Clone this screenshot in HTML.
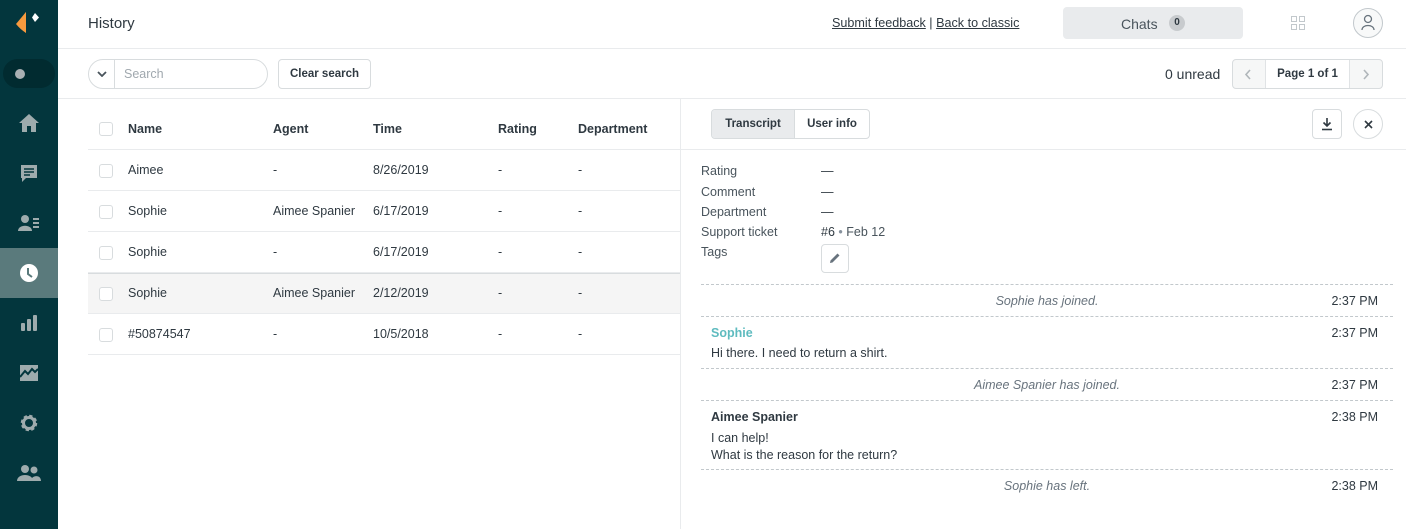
<!DOCTYPE html>
<html><head><meta charset="utf-8"><style>
*{box-sizing:border-box;margin:0;padding:0}
body{width:1406px;height:529px;overflow:hidden;font-family:"Liberation Sans",sans-serif;color:#2f3941;background:#fff;position:relative;font-size:13px}
.a{position:absolute}
.sb{left:0;top:0;width:58px;height:529px;background:#03363d}
.ic{left:0;width:58px;height:50px;display:flex;align-items:center;justify-content:center}
.hl{border-bottom:1px solid #e9ebed}
.th{font-weight:bold;font-size:12.5px}
.cb{width:14px;height:14px;border:1px solid #d8dcde;border-radius:3px;background:#fff}
.row{left:88px;width:592px;height:41px;border-bottom:1px solid #e9ebed}
.row span{position:absolute;top:13px;font-size:12.5px}
.btn{border:1px solid #d8dcde;border-radius:4px;background:#fff}
.lab{left:701px;font-size:12.5px;color:#49545c}
.val{left:821px;font-size:12.5px}
.dash{left:701px;width:692px;border-top:1px dashed #c2c8cc}
.sys{left:701px;width:692px;text-align:center;font-style:italic;color:#68737d;font-size:12.5px}
.tm{right:28px;font-size:12.5px}
</style></head><body>
<div class="a sb"></div>
<svg class="a" style="left:14px;top:10px" width="30" height="25" viewBox="0 0 30 25"><path d="M12 2 L12 23 Q6 19 2 14 Z" fill="#f79a3e"/><path d="M12 2 L12 23 L3 14 Z" fill="#f79a3e"/><path d="M21 3 L25 7.5 L21 12 L18 7.5 Z" fill="#fff"/></svg>
<div class="a" style="left:3px;top:59px;width:52px;height:29px;border-radius:15px;background:#012b30"></div>
<div class="a" style="left:15px;top:69px;width:10px;height:10px;border-radius:50%;background:#a9b0b3"></div>
<div class="a ic" style="top:98px"><svg width="22" height="20" viewBox="0 0 22 20"><path d="M11 1 L21 10 L18 10 L18 19 L13 19 L13 13 L9 13 L9 19 L4 19 L4 10 L1 10Z" fill="#9eabad"/></svg></div>
<div class="a ic" style="top:148px"><svg width="20" height="20" viewBox="0 0 20 20"><path d="M2 2 H18 V15 H7 L3 19 V15 H2Z" fill="#9eabad"/><path d="M5 6H15M5 9H15M5 12H11" stroke="#03363d" stroke-width="1.5"/></svg></div>
<div class="a ic" style="top:198px"><svg width="22" height="20" viewBox="0 0 22 20"><circle cx="7" cy="6" r="4" fill="#9eabad"/><path d="M0 18 C0 11 14 11 14 18Z" fill="#9eabad"/><path d="M15 6H21M15 10H21M15 14H21" stroke="#9eabad" stroke-width="2"/></svg></div>
<div class="a ic" style="top:248px;background:#5a7a7c"><svg width="20" height="20" viewBox="0 0 20 20"><circle cx="10" cy="10" r="9" fill="#fff"/><path d="M9 5V11L13 14" stroke="#5a7a7c" stroke-width="2" fill="none"/></svg></div>
<div class="a ic" style="top:298px"><svg width="18" height="18" viewBox="0 0 18 18"><rect x="1" y="9" width="4" height="8" rx="1" fill="#9eabad"/><rect x="7" y="5" width="4" height="12" rx="1" fill="#9eabad"/><rect x="13" y="1" width="4" height="16" rx="1" fill="#9eabad"/></svg></div>
<div class="a ic" style="top:348px"><svg width="20" height="18" viewBox="0 0 20 18"><rect x="1" y="1" width="18" height="16" fill="#9eabad"/><path d="M1 13 L6 7 L9 10 L13 5 L16 8 L19 5" stroke="#03363d" stroke-width="2" fill="none"/></svg></div>
<div class="a ic" style="top:398px"><svg width="20" height="20" viewBox="0 0 20 20"><circle cx="10" cy="10" r="6.5" fill="none" stroke="#9eabad" stroke-width="3.5" stroke-dasharray="3 2.1"/><circle cx="10" cy="10" r="5.5" fill="none" stroke="#9eabad" stroke-width="3"/></svg></div>
<div class="a ic" style="top:448px"><svg width="24" height="18" viewBox="0 0 24 18"><circle cx="8" cy="5" r="4" fill="#9eabad"/><circle cx="17" cy="6" r="3.5" fill="#9eabad"/><path d="M0 17 C0 9 16 9 16 17Z M14 17 C14 11 24 10 24 17Z" fill="#9eabad"/></svg></div>

<div class="a hl" style="left:58px;top:0;width:1348px;height:49px"></div>
<div class="a" style="left:88px;top:15px;font-size:15px">History</div>
<div class="a" style="left:832px;top:16px;font-size:12.6px"><u>Submit feedback</u> | <u>Back to classic</u></div>
<div class="a" style="left:1063px;top:7px;width:180px;height:32px;background:#e9ebed;border-radius:4px"></div>
<div class="a" style="left:1121px;top:16px;font-size:14px;color:#49545c">Chats</div>
<div class="a" style="left:1169px;top:15px;width:16px;height:16px;border-radius:50%;background:#c8cbce;font-size:10px;text-align:center;line-height:16px;font-weight:bold">0</div>
<svg class="a" style="left:1291px;top:16px" width="15" height="15"><rect x=".5" y=".5" width="5" height="5" fill="none" stroke="#c2c8cc"/><rect x="8.5" y=".5" width="5" height="5" fill="none" stroke="#c2c8cc"/><rect x=".5" y="8.5" width="5" height="5" fill="none" stroke="#c2c8cc"/><rect x="8.5" y="8.5" width="5" height="5" fill="none" stroke="#c2c8cc"/></svg>
<div class="a" style="left:1353px;top:8px;width:30px;height:30px;border-radius:50%;border:1px solid #c2c8cc;background:#f8f9f9"></div>
<svg class="a" style="left:1360px;top:14px" width="16" height="18"><circle cx="8" cy="5" r="3.5" fill="none" stroke="#68737d" stroke-width="1.3"/><path d="M2 16 C2 10 14 10 14 16" fill="none" stroke="#68737d" stroke-width="1.3"/></svg>

<div class="a hl" style="left:58px;top:49px;width:1348px;height:50px"></div>
<div class="a" style="left:88px;top:59px;width:180px;height:30px;border:1px solid #d8dcde;border-radius:15px"></div>
<div class="a" style="left:114px;top:60px;width:1px;height:28px;background:#d8dcde"></div>
<svg class="a" style="left:97px;top:71px" width="10" height="6"><path d="M1 1L5 5L9 1" stroke="#49545c" stroke-width="1.8" fill="none"/></svg>
<div class="a" style="left:124px;top:67px;font-size:12.5px;color:#a0a8ae">Search</div>
<div class="a btn" style="left:278px;top:59px;width:93px;height:30px;font-size:11.5px;font-weight:bold;text-align:center;line-height:28px">Clear search</div>
<div class="a" style="left:1165px;top:66px;font-size:14px">0 unread</div>
<div class="a btn" style="left:1232px;top:59px;width:151px;height:30px;background:#f6f7f7"></div>
<div class="a" style="left:1265px;top:60px;width:85px;height:28px;background:#fff;border-left:1px solid #e0e3e5;border-right:1px solid #e0e3e5;font-size:11.5px;font-weight:bold;text-align:center;line-height:28px">Page 1 of 1</div>
<svg class="a" style="left:1244px;top:69px" width="8" height="11"><path d="M6 1L2 5.5L6 10" stroke="#b0b6ba" stroke-width="1.6" fill="none"/></svg>
<svg class="a" style="left:1362px;top:69px" width="8" height="11"><path d="M2 1L6 5.5L2 10" stroke="#b0b6ba" stroke-width="1.6" fill="none"/></svg>

<div class="a" style="left:680px;top:99px;width:1px;height:430px;background:#e9ebed"></div>
<div class="a row" style="top:108px;height:42px"><div class="a cb" style="left:11px;top:14px"></div>
<span class="th" style="left:40px;top:14px">Name</span><span class="th" style="left:185px;top:14px">Agent</span><span class="th" style="left:285px;top:14px">Time</span><span class="th" style="left:410px;top:14px">Rating</span><span class="th" style="left:490px;top:14px">Department</span></div>
<div class="a row" style="top:150px"><div class="a cb" style="left:11px;top:14px"></div><span style="left:40px">Aimee</span><span style="left:185px">-</span><span style="left:285px">8/26/2019</span><span style="left:410px">-</span><span style="left:490px">-</span></div>
<div class="a row" style="top:191px"><div class="a cb" style="left:11px;top:14px"></div><span style="left:40px">Sophie</span><span style="left:185px">Aimee Spanier</span><span style="left:285px">6/17/2019</span><span style="left:410px">-</span><span style="left:490px">-</span></div>
<div class="a row" style="top:232px"><div class="a cb" style="left:11px;top:14px"></div><span style="left:40px">Sophie</span><span style="left:185px">-</span><span style="left:285px">6/17/2019</span><span style="left:410px">-</span><span style="left:490px">-</span></div>
<div class="a row" style="top:273px;background:#f5f5f5;border-top:1px solid #d8dcde"><div class="a cb" style="left:11px;top:13px"></div><span style="left:40px;top:12px">Sophie</span><span style="left:185px;top:12px">Aimee Spanier</span><span style="left:285px;top:12px">2/12/2019</span><span style="left:410px;top:12px">-</span><span style="left:490px;top:12px">-</span></div>
<div class="a row" style="top:314px"><div class="a cb" style="left:11px;top:14px"></div><span style="left:40px">#50874547</span><span style="left:185px">-</span><span style="left:285px">10/5/2018</span><span style="left:410px">-</span><span style="left:490px">-</span></div>

<div class="a" style="left:681px;top:149px;width:725px;border-top:1px solid #e9ebed"></div>
<div class="a btn" style="left:711px;top:109px;width:159px;height:30px;overflow:hidden"><div class="a" style="left:0;top:0;width:83px;height:28px;background:#e9ebed;border-right:1px solid #d8dcde;font-size:11.5px;font-weight:bold;text-align:center;line-height:28px">Transcript</div><div class="a" style="left:83px;top:0;width:74px;height:28px;font-size:11.5px;font-weight:bold;text-align:center;line-height:28px">User info</div></div>
<div class="a btn" style="left:1312px;top:109px;width:30px;height:30px"></div>
<svg class="a" style="left:1321px;top:117px" width="12" height="14"><path d="M6 1V9M2.5 5.5L6 9L9.5 5.5" stroke="#2f3941" stroke-width="1.6" fill="none"/><path d="M1 12.5H11" stroke="#2f3941" stroke-width="1.6"/></svg>
<div class="a" style="left:1353px;top:109px;width:30px;height:30px;border:1px solid #d8dcde;border-radius:50%"></div>
<svg class="a" style="left:1364px;top:120px" width="9" height="9"><path d="M1 1L8 8M8 1L1 8" stroke="#2f3941" stroke-width="1.6"/></svg>

<div class="a lab" style="top:164px">Rating</div><div class="a val" style="top:164px">—</div>
<div class="a lab" style="top:185px">Comment</div><div class="a val" style="top:185px">—</div>
<div class="a lab" style="top:205px">Department</div><div class="a val" style="top:205px">—</div>
<div class="a lab" style="top:225px">Support ticket</div><div class="a val" style="top:225px">#6 <span style="color:#87929d">•</span> <span style="color:#49545c">Feb 12</span></div>
<div class="a lab" style="top:245px">Tags</div>
<div class="a btn" style="left:821px;top:244px;width:28px;height:29px"></div>
<svg class="a" style="left:829px;top:252px" width="12" height="12"><path d="M1 11L1.5 8.5L8.5 1.5L10.5 3.5L3.5 10.5Z" fill="#68737d"/></svg>

<div class="a dash" style="top:284px"></div>
<div class="a sys" style="top:294px">Sophie has joined.</div><div class="a tm" style="top:294px">2:37 PM</div>
<div class="a dash" style="top:316px"></div>
<div class="a" style="left:711px;top:326px;font-weight:bold;color:#5ebbbf;font-size:12.5px">Sophie</div><div class="a tm" style="top:326px">2:37 PM</div>
<div class="a" style="left:711px;top:346px;font-size:12.5px">Hi there. I need to return a shirt.</div>
<div class="a dash" style="top:368px"></div>
<div class="a sys" style="top:378px">Aimee Spanier has joined.</div><div class="a tm" style="top:378px">2:37 PM</div>
<div class="a dash" style="top:400px"></div>
<div class="a" style="left:711px;top:410px;font-weight:bold;font-size:12.5px">Aimee Spanier</div><div class="a tm" style="top:410px">2:38 PM</div>
<div class="a" style="left:711px;top:430px;font-size:12.5px;line-height:17px">I can help!<br>What is the reason for the return?</div>
<div class="a dash" style="top:469px"></div>
<div class="a sys" style="top:479px">Sophie has left.</div><div class="a tm" style="top:479px">2:38 PM</div>
</body></html>
